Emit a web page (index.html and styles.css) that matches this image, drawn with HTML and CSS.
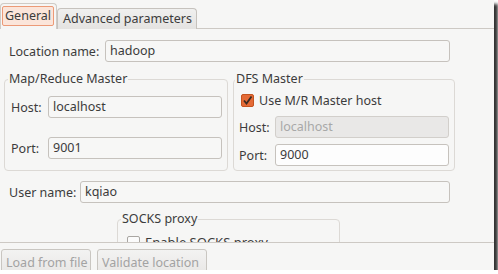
FILE: index.html
```html
<!DOCTYPE html>
<html lang="en">
<head>
    <meta charset="UTF-8">
    <title>New Hadoop location</title>
    <link rel="stylesheet" href="styles.css">
</head>
<body>
    <div class="window">
        <div class="tabs">
            <div class="tab tab-active"><span class="tab-focus">General</span></div>
            <div class="tab">Advanced parameters</div>
        </div>

        <div class="pane">
            <div class="field-row row-location">
                <label>Location name:</label>
                <div class="entry entry-location">hadoop</div>
            </div>

            <div class="groups">
                <fieldset class="group group-mr">
                    <legend>Map/Reduce Master</legend>
                    <div class="field-row mr-host">
                        <label>Host:</label>
                        <div class="entry">localhost</div>
                    </div>
                    <div class="field-row mr-port">
                        <label>Port:</label>
                        <div class="entry">9001</div>
                    </div>
                </fieldset>

                <fieldset class="group group-dfs">
                    <legend>DFS Master</legend>
                    <div class="check-row dfs-check">
                        <span class="check check-on">
                            <svg width="13" height="13" viewBox="0 0 13 13"><path d="M3 6.5 L5.5 9.5 L10.5 2.5" fill="none" stroke="#3a2a22" stroke-width="1.8"/></svg>
                        </span>
                        Use M/R Master host
                    </div>
                    <div class="field-row dfs-host">
                        <label>Host:</label>
                        <div class="entry entry-disabled">localhost</div>
                    </div>
                    <div class="field-row dfs-port">
                        <label>Port:</label>
                        <div class="entry entry-white">9000</div>
                    </div>
                </fieldset>
            </div>

            <div class="field-row row-user">
                <label>User name:</label>
                <div class="entry entry-user">kqiao</div>
            </div>

            <fieldset class="group group-socks">
                <legend>SOCKS proxy</legend>
                <div class="check-row socks-check">
                    <span class="check"></span>
                    Enable SOCKS proxy
                </div>
            </fieldset>
        </div>

        <div class="footer">
            <button disabled>Load from file</button>
            <button disabled>Validate location</button>
        </div>
    </div>
</body>
</html>
```

FILE: styles.css
```css
body {
    margin: 0;
    background: #fff;
    font-family: "Noto Sans", sans-serif;
    font-size: 12.5px;
    color: #3c3c3c;
    white-space: nowrap;
}

.window {
    width: 494px;
    height: 270px;
    background: #f6f6f5;
    box-shadow: 4px 4px 3px rgba(0, 0, 0, 0.8);
    display: flex;
    flex-direction: column;
    overflow: hidden;
}

/* tabs */
.tabs {
    height: 28px;
    border-bottom: 1px solid #cdc9c4;
    display: flex;
    align-items: flex-end;
    flex-shrink: 0;
}

.tab {
    height: 21px;
    line-height: 20px;
    padding: 0 4px 0 5px;
    border: 1px solid #c6c2bd;
    border-bottom: none;
    border-radius: 4px 4px 0 0;
    background: linear-gradient(#f0f0ef, #e4e3e1);
    margin-bottom: -1px;
    box-sizing: border-box;
}

.tab-active {
    height: 26px;
    padding: 2px 2px 0 1px;
    background: #f6f6f5;
    border-color: #cfcbc6;
}

.tab-focus {
    display: block;
    height: 20px;
    line-height: 18px;
    padding: 0 2px;
    border: 1px solid #ec9a77;
    border-radius: 2px;
    background: #fbe5da;
    box-sizing: border-box;
}

/* page */
.pane {
    flex: 1;
    overflow: hidden;
    padding: 11px 0 0 4px;
}

.field-row {
    display: flex;
    align-items: center;
}

.field-row label {
    flex-shrink: 0;
}

.entry {
    height: 22px;
    line-height: 20px;
    padding: 0 4px;
    border: 1px solid #c6c2bd;
    border-radius: 3px;
    background: #f7f7f6;
    box-sizing: border-box;
}

.entry-white {
    background: #fdfdfd;
}

.entry-disabled {
    background: #e9e8e7;
    border-color: #d2cfcb;
    color: #a8a8a8;
}

.row-location {
    padding-left: 5px;
}

.row-location label {
    width: 96px;
}

.entry-location {
    width: 345px;
}

.groups {
    display: flex;
    gap: 5px;
    margin-top: 9px;
}

.group {
    margin: 0;
    padding: 0 5px;
    border: 1px solid #dcd9d5;
    border-radius: 4px;
}

.group legend {
    padding: 0 1px;
    margin-left: -2px;
    line-height: 16px;
}

.group-mr {
    width: 223px;
    box-sizing: border-box;
    padding-bottom: 11px;
}

.group-mr label {
    width: 37px;
    margin-left: 1px;
}

.group-mr .entry {
    width: 174px;
}

.mr-host {
    margin-top: 9px;
}

.mr-port {
    margin-top: 19px;
}

.group-dfs {
    width: 220px;
    box-sizing: border-box;
    padding: 0 5px 4px 4px;
}

.group-dfs legend {
    margin-left: -3px;
}

.group-dfs label {
    width: 36px;
    margin-left: 1px;
}

.group-dfs .entry {
    width: 174px;
}

.check-row {
    display: flex;
    align-items: center;
    height: 16px;
}

.check {
    width: 13px;
    height: 13px;
    border: 1px solid #a9a6a2;
    border-radius: 2px;
    background: #fbfbfb;
    box-sizing: border-box;
    margin-right: 5px;
    display: flex;
    align-items: center;
    justify-content: center;
}

.check-on {
    background: #e46a36;
    border-color: #c4531f;
}

.check-on svg {
    flex-shrink: 0;
}

.dfs-check {
    margin-top: 5px;
    padding-left: 3px;
}

.dfs-host {
    margin-top: 8px;
}

.dfs-port {
    margin-top: 6px;
}

.row-user {
    margin-top: 10px;
    padding-left: 5px;
}

.row-user label {
    width: 71px;
}

.entry-user {
    width: 370px;
}

.group-socks {
    width: 223px;
    box-sizing: border-box;
    margin: 8px 0 0 113px;
    height: 60px;
}

.socks-check {
    margin-top: 7px;
    padding-left: 4px;
    font-size: 13px;
}

/* bottom buttons */
.footer {
    flex-shrink: 0;
    height: 21px;
    border-top: 1px solid #cdc9c4;
    padding: 6px 0 0 1px;
    display: flex;
    gap: 6px;
    overflow: hidden;
}

.footer button {
    font: inherit;
    color: #a3a3a3;
    height: 24px;
    padding: 2px 4px 0 4px;
    border: 1px solid #c9c6c1;
    border-radius: 3px;
    background: linear-gradient(#f3f3f2, #e9e8e6);
    text-align: left;
    white-space: nowrap;
}

.footer button:first-child {
    width: 90px;
}

.footer button:last-child {
    width: 110px;
}
```
